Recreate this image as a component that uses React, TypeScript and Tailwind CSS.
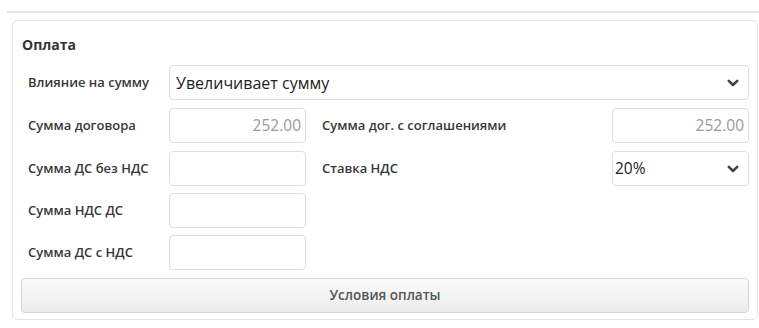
import React from "react";

function Chevron() {
  return (
    <svg width="12" height="8" viewBox="0 0 12 8" className="shrink-0">
      <path d="M1.8 1.8 L6 6 L10.2 1.8" fill="none" stroke="#444" strokeWidth="2.6" strokeLinecap="round" strokeLinejoin="round" />
    </svg>
  );
}

function Field({ value }: { value?: string }) {
  return (
    <div className="w-[137px] h-[35px] shrink-0 rounded-[4px] border border-[#dedede] bg-white flex items-center justify-end pr-[4px] text-[15.5px] text-[#9a9a9a]">
      {value}
    </div>
  );
}

function Label({ children }: { children: React.ReactNode }) {
  return <div className="w-[148px] shrink-0 pl-[7px] text-[13px] font-semibold text-[#383838]">{children}</div>;
}

export default function App() {
  return (
    <div className="w-[759px] h-[328px] bg-white" style={{ fontFamily: '"Open Sans", "Liberation Sans", sans-serif' }}>
      <div className="pt-[11px] pl-[7px]">
        <div className="h-[2px] bg-[#e8e8e8]" />
      </div>
      <div className="mt-[7px] ml-[12px] mr-[1px] rounded-[5px] border border-[#e6e6e6] p-[8px] pb-[6px]">
        <div className="h-[30px] flex items-center pl-[1px] text-[14px] font-bold text-[#333]">Оплата</div>

        {/* Влияние на сумму */}
        <div className="mt-[6px] flex items-center">
          <Label>Влияние на сумму</Label>
          <div className="flex-1 h-[35px] rounded-[4px] border border-[#dedede] flex items-center justify-between pl-[6px] pr-[9px]">
            <span className="text-[16px] text-[#222]">Увеличивает сумму</span>
            <Chevron />
          </div>
        </div>

        <div className="mt-[8px] flex items-center">
          <Label>Сумма договора</Label>
          <Field value="252.00" />
          <div className="flex-1 pl-[16px] text-[13px] font-semibold text-[#383838]">Сумма дог. с соглашениями</div>
          <Field value="252.00" />
        </div>

        <div className="mt-[8px] flex items-center">
          <Label>Сумма ДС без НДС</Label>
          <Field />
          <div className="flex-1 pl-[16px] text-[13px] font-semibold text-[#383838]">Ставка НДС</div>
          <div className="w-[137px] h-[35px] shrink-0 rounded-[4px] border border-[#dedede] flex items-center justify-between pl-[2px] pr-[9px]">
            <span className="text-[15.5px] text-[#222]">20%</span>
            <Chevron />
          </div>
        </div>

        <div className="mt-[7px] flex items-center">
          <Label>Сумма НДС ДС</Label>
          <Field />
        </div>

        <div className="mt-[7px] flex items-center">
          <Label>Сумма ДС с НДС</Label>
          <Field />
        </div>

        <button className="mt-[8px] w-full h-[35px] rounded-[4px] border border-[#d6d6d6] bg-gradient-to-b from-[#fbfbfb] to-[#ececec] text-[13.5px] font-semibold text-[#555]">
          Условия оплаты
        </button>
      </div>
    </div>
  );
}
